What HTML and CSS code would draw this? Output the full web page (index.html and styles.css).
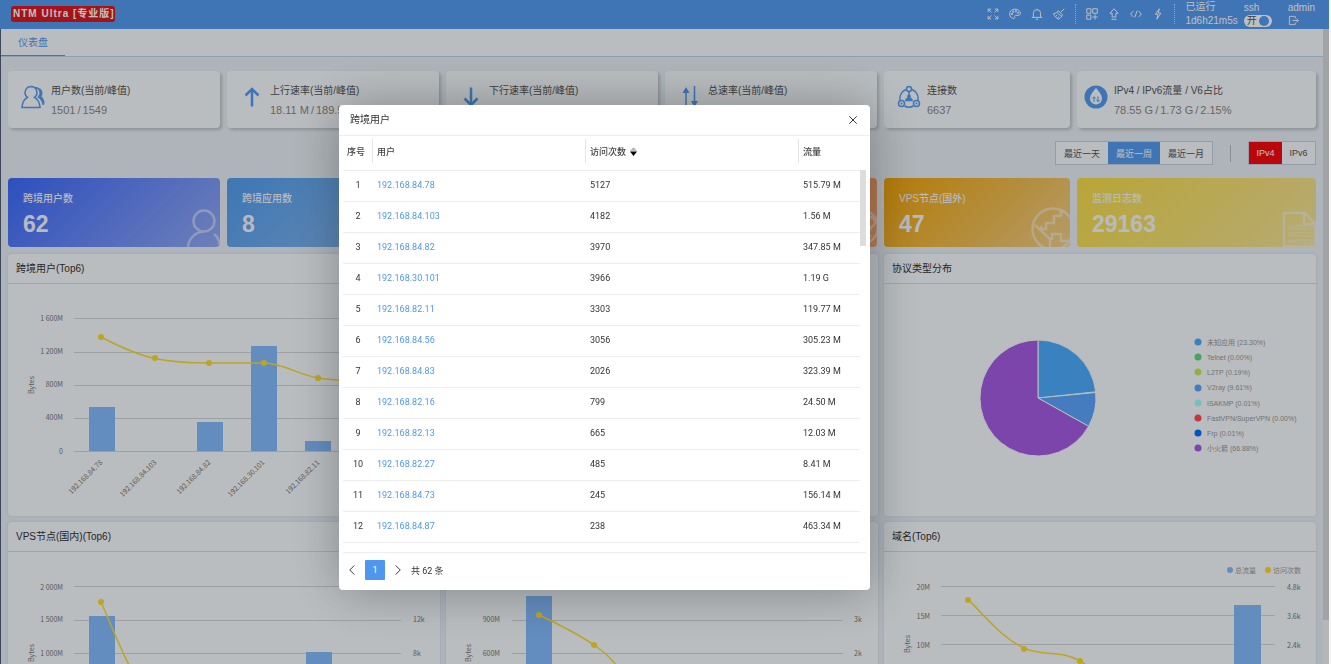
FILE: index.html
```html
<!DOCTYPE html>
<html lang="zh-CN">
<head>
  <meta charset="UTF-8" />
  <meta name="viewport" content="width=device-width, initial-scale=1.0" />
  <title>NTM Ultra</title>
  <link rel="stylesheet" href="styles.css">
</head>
<body>
  <div class="app">
    <header class="topbar">
      <h1 class="brand">NTM Ultra [专业版]</h1>
      <div class="tools">
        <button class="tool" aria-label="全屏"><svg viewBox="0 0 16 16"><path d="M1.500 5.500v-4h4M10.500 1.500h4v4M14.500 10.500v4h-4M5.500 14.500h-4v-4M2 2l4 4M14 2l-4 4M14 14l-4-4M2 14l4-4"/></svg></button>
        <button class="tool" aria-label="主题"><svg viewBox="0 0 16 16"><path d="M8 1.500C4 1.500.8 4.300.8 8c0 3.500 2.600 6 5.500 6 1.500 0 1.500-1 1.200-2.100-.3-1 .2-2.100 1.500-2.100h3c2 0 3.200-1 3.200-2.600C15.200 4 12 1.500 8 1.500z"/><circle cx="4" cy="8" r="1"/><circle cx="5.500" cy="5" r="1"/><circle cx="9" cy="4.300" r="1"/><circle cx="12" cy="6.300" r="1"/></svg></button>
        <button class="tool" aria-label="消息"><svg viewBox="0 0 16 16"><path d="M1 12.500h14M3.200 12.500V7a4.800 4.800 0 0 1 9.600 0v5.500M8 2.200V1M6.500 15h3"/></svg></button>
        <button class="tool" aria-label="清理"><svg viewBox="0 0 16 16"><path d="M15 1L10.500 5.500M7 3.500l5.500 5.500M7 3.500C5.500 6 3.500 7 .8 7.500c1 3.500 3.500 6.200 7.200 7.500 1.800-1.500 3.500-3.500 4.500-6M5.500 5.800l5 5M3.500 11l2-1.500M6 13.300l2-1.800"/></svg></button>
      </div>
      <div class="tools">
        <button class="tool" aria-label="应用"><svg viewBox="0 0 16 16"><path d="M1 1h5.500v6H1zM9 1h6v6H9zM1 9.500h5.500V15H1zM12 8.500v7M8.500 12H15.500"/></svg></button>
        <button class="tool" aria-label="升级"><svg viewBox="0 0 16 16"><path d="M8 1L2.500 7H5.500v5h5V7h3zM4.500 15h7"/></svg></button>
        <button class="tool" aria-label="接口"><svg viewBox="0 0 16 16"><path d="M4.500 4L.8 8l3.700 4M11.500 4L15.200 8l-3.700 4M9.500 3.500l-3 9"/></svg></button>
        <button class="tool" aria-label="电源"><svg viewBox="0 0 16 16"><path d="M9.800 1L4.500 8.500H8L6.500 15 11.800 6.800H8.300z"/></svg></button>
      </div>
      <div class="status uptime"><span>已运行</span><span>1d6h21m5s</span></div>
      <div class="status ssh">
        <label for="ssh">ssh</label>
        <span class="switch"><input type="checkbox" id="ssh" checked><span>开</span></span>
      </div>
      <div class="status">
        <span>admin</span>
        <button class="logout" aria-label="退出"><svg viewBox="0 0 16 16"><path d="M10.500 5V2H2v12h8.500v-3M6.500 8h8.500M12 5l3 3-3 3"/></svg></button>
      </div>
    </header>

    <div class="body">
      <main class="main">
        <nav class="tabs"><a href="#dashboard" class="tab">仪表盘</a></nav>

        <div class="content">
          <section class="cards">
            <div class="stat">
              <svg class="stat-icon" viewBox="0 0 24 24"><path d="M10 1.500a6 6 0 0 0-3.500 10.800C3.500 14 1.200 17 1 22.500h18c-.2-5.500-2.500-8.500-5.500-10.200A6 6 0 0 0 10 1.500zM14.500 2.500a5.500 5.500 0 0 1 3 9.500c2.500 1.500 4.300 4 4.800 8M18.500 4a5 5 0 0 1 1 7.500c2 1.500 3 3.500 3.500 7"/></svg>
              <div><h2>用户数(当前/峰值)</h2><p>1501<i>/</i>1549</p></div>
            </div>
            <div class="stat">
              <svg class="stat-icon bold" viewBox="0 0 24 24"><path d="M12 21.500V3.500M5.500 10.500L12 4l6.500 6.500"/></svg>
              <div><h2>上行速率(当前/峰值)</h2><p>18.11 M<i>/</i>189.52 M</p></div>
            </div>
            <div class="stat">
              <svg class="stat-icon bold" viewBox="0 0 24 24"><path d="M12 2.500V20.500M5.500 13.500L12 20l6.500-6.500"/></svg>
              <div><h2>下行速率(当前/峰值)</h2><p>55.47 M<i>/</i>402.10 M</p></div>
            </div>
            <div class="stat">
              <svg class="stat-icon" viewBox="0 0 24 24"><path d="M8 22V4M16.500 1v18"/><path class="fill" d="M8 2L4.500 8h7zM16.500 22L13 16h7z"/></svg>
              <div><h2>总速率(当前/峰值)</h2><p>73.58 M<i>/</i>591.62 M</p></div>
            </div>
            <div class="stat">
              <svg class="stat-icon" viewBox="0 0 24 24"><circle cx="12" cy="4" r="2.500"/><circle cx="4.500" cy="18.500" r="3"/><circle cx="19.500" cy="18.500" r="3"/><circle class="fill" cx="4.500" cy="18.500" r="1"/><circle class="fill" cx="19.500" cy="18.500" r="1"/><path d="M9 4.500A10 10 0 0 0 3 15M15 4.500A10 10 0 0 1 21 15M7.500 21a10 10 0 0 0 9 0M12 7v4"/><path class="fill" d="M12 9.500c1.800 0 2.300 2 1.600 3.200 1.500.6 2.400 1.800 2.400 3.600H8c0-1.800.9-3 2.400-3.600-.7-1.200-.2-3.200 1.600-3.200z"/></svg>
              <div><h2>连接数</h2><p>6637</p></div>
            </div>
            <div class="stat compact">
              <svg class="stat-icon" viewBox="0 0 24 24"><circle class="fill" cx="12" cy="12" r="11.500"/><path class="drop" d="M12 3c3.500 4 6 7 6 10.500a6 6 0 0 1-12 0C6 10 8.500 7 12 3z"/><path class="thin" d="M10 17v-5M8.300 13.500L10 11.800l1.700 1.700M14 11.500v5M12.300 15l1.700 1.700 1.700-1.700"/></svg>
              <div><h2>IPv4 / IPv6流量 / V6占比</h2><p>78.55 G<i>/</i>1.73 G<i>/</i>2.15%</p></div>
            </div>
          </section>

          <div class="filters">
            <div class="group">
              <button>最近一天</button><button class="on">最近一周</button><button>最近一月</button>
            </div>
            <span class="divider"></span>
            <div class="group ip">
              <button class="on">IPv4</button><button>IPv6</button>
            </div>
          </div>

          <section class="cards">
            <div class="tile royal">
              <h2>跨境用户数</h2><p>62</p>
              <svg viewBox="0 0 40 40"><circle cx="24" cy="14" r="10.500"/><path d="M8 41c0-9 7-16 16-16.500M34 27c4 3 6 7 6 13"/></svg>
            </div>
            <div class="tile sky"><h2>跨境应用数</h2><p>8</p></div>
            <div class="tile green"></div>
            <div class="tile coral">
              <svg viewBox="0 0 40 40"><circle cx="24" cy="20" r="17"/><path d="M28 15a5 5 0 1 1 7 4.500c-2 1-2 2-2 4M33 28v2"/></svg>
            </div>
            <div class="tile orange">
              <h2>VPS节点(国外)</h2><p>47</p>
              <svg viewBox="0 0 40 40"><circle cx="23" cy="22" r="20.500"/><path d="M31 4v5h-7v7h-8v6h-5v-3M5 18l15 14v10M40 34h-9v-7h-9v6"/></svg>
            </div>
            <div class="tile yellow">
              <h2>监测日志数</h2><p>29163</p>
              <svg viewBox="0 0 40 40"><path d="M8 39V6h21l10 11v22zM28 6v11h12"/><path class="fine" d="M13 19h4v3h-4zM19 19h17v3H19zM13 26h4v3h-4zM19 26h17v3H19zM13 33h4v3h-4zM19 33h17v3H19z"/></svg>
            </div>
          </section>

          <section class="panels">
            <article class="panel">
              <h2>跨境用户(Top6)</h2>
              <svg class="chart" viewBox="0 0 432 232">
                <path class="grid" d="M66 34.500H395M66 68.500H395M66 101.500H395M66 134.500H395M66 167.500H395"/>
                <g class="bars"><rect x="81" y="123" width="26" height="44"/><rect x="189" y="138" width="26" height="29"/><rect x="243" y="62" width="26" height="105"/><rect x="297" y="157" width="26" height="10"/></g>
                <path class="line" d="M93 53C112 63 130 71 147 74.500S183 79 201 79H256C274 79 292 91 310 94S346 97 364 97"/>
                <g class="dots"><circle cx="93" cy="53" r="3"/><circle cx="147" cy="74" r="3"/><circle cx="201" cy="79" r="3"/><circle cx="256" cy="79" r="3"/><circle cx="310" cy="94" r="3"/></g>
                <g class="end"><text x="55" y="37">1 600M</text><text x="55" y="70">1 200M</text><text x="55" y="103">800M</text><text x="55" y="136">400M</text><text x="55" y="170">0</text></g>
                <text class="middle" transform="translate(26 101) rotate(-90)">Bytes</text>
                <g class="end">
                  <text transform="translate(95 179) rotate(-45)">192.168.84.78</text>
                  <text transform="translate(149 179) rotate(-45)">192.168.84.103</text>
                  <text transform="translate(203 179) rotate(-45)">192.168.84.82</text>
                  <text transform="translate(257 179) rotate(-45)">192.168.30.101</text>
                  <text transform="translate(312 179) rotate(-45)">192.168.82.11</text>
                </g>
              </svg>
            </article>

            <article class="panel"></article>

            <article class="panel">
              <h2>协议类型分布</h2>
              <svg class="chart pie" viewBox="0 0 432 232">
                <path class="c1" d="M154 114V56A58 58 0 0 1 211.700 107.800Z"/>
                <path class="c4" d="M154 114L211.700 108.500A58 58 0 0 1 204.600 142.300Z"/>
                <path class="c8" d="M154 114L204.600 142.300A58 58 0 1 1 154 56Z"/>
                <g class="legend">
                  <circle class="c1" cx="314" cy="58" r="3.500"/><text x="323" y="61">未知应用 (23.30%)</text>
                  <circle class="c2" cx="314" cy="73" r="3.500"/><text x="323" y="76">Telnet (0.00%)</text>
                  <circle class="c3" cx="314" cy="88" r="3.500"/><text x="323" y="91">L2TP (0.19%)</text>
                  <circle class="c4" cx="314" cy="104" r="3.500"/><text x="323" y="106">V2ray (9.61%)</text>
                  <circle class="c5" cx="314" cy="119" r="3.500"/><text x="323" y="122">ISAKMP (0.01%)</text>
                  <circle class="c6" cx="314" cy="134" r="3.500"/><text x="323" y="137">FastVPN/SuperVPN (0.00%)</text>
                  <circle class="c7" cx="314" cy="149" r="3.500"/><text x="323" y="152">Frp (0.01%)</text>
                  <circle class="c8" cx="314" cy="164" r="3.500"/><text x="323" y="167">小火箭 (66.88%)</text>
                </g>
              </svg>
            </article>

            <article class="panel">
              <h2>VPS节点(国内)(Top6)</h2>
              <svg class="chart" viewBox="0 0 432 232">
                <path class="grid" d="M66 34.500H393M66 68.500H393M66 101.500H393M66 134.500H393M66 167.500H393"/>
                <g class="bars"><rect x="81" y="64" width="26" height="103"/><rect x="298" y="100" width="26" height="67"/></g>
                <path class="line" d="M93 50C102 70 110 92 121 113S135 145 147 150"/>
                <g class="dots"><circle cx="93" cy="50" r="3"/></g>
                <g class="end"><text x="55" y="38">2 000M</text><text x="55" y="70">1 500M</text><text x="55" y="104">1 000M</text></g>
                <text x="405" y="70">12k</text><text x="405" y="104">8k</text>
                <text class="middle" transform="translate(26 101) rotate(-90)">Bytes</text>
              </svg>
            </article>

            <article class="panel">
              <svg class="chart untitled" viewBox="0 0 432 232">
                <path class="grid" d="M66 68.500H397M66 101.500H397M66 134.500H397"/>
                <g class="bars"><rect x="80" y="44" width="26" height="123"/></g>
                <path class="line" d="M93 63C112 72 132 82 148 93S166 108 184 130"/>
                <g class="dots"><circle cx="93" cy="63" r="3"/><circle cx="148" cy="93" r="3"/></g>
                <g class="end"><text x="54" y="70">900M</text><text x="54" y="104">600M</text></g>
                <text x="408" y="70">3k</text><text x="408" y="104">2k</text>
                <text class="middle" transform="translate(25 101) rotate(-90)">Bytes</text>
              </svg>
            </article>

            <article class="panel">
              <h2>域名(Top6)</h2>
              <svg class="chart" viewBox="0 0 432 232">
                <path class="grid" d="M57 34.500H391M57 63.500H391M57 92.500H391M57 121.500H391"/>
                <g class="bars"><rect x="350" y="53" width="27" height="114"/></g>
                <path class="line" d="M84 47C102 66 120 87 140 96S179 98 196 109S230 130 251 132"/>
                <g class="dots"><circle cx="84" cy="48" r="3"/><circle cx="140" cy="97" r="3"/><circle cx="196" cy="109" r="3"/></g>
                <g class="end"><text x="46" y="38">20M</text><text x="46" y="67">15M</text><text x="46" y="96">10M</text></g>
                <text x="403" y="38">4.8k</text><text x="403" y="67">3.6k</text><text x="403" y="96">2.4k</text>
                <text class="middle" transform="translate(26 92) rotate(-90)">Bytes</text>
                <g class="legend"><circle class="bar-key" cx="346" cy="18" r="3"/><text x="351" y="21">总流量</text><circle class="line-key" cx="384" cy="18" r="3"/><text x="389" y="21">访问次数</text></g>
              </svg>
            </article>
          </section>
        </div>
      </main>
      <div class="page-scroll"><span></span></div>
    </div>
  </div>

  <div class="shade"></div>

  <div class="dialog" role="dialog" aria-labelledby="dialog-title">
    <div class="dialog-head">
      <h2 id="dialog-title">跨境用户</h2>
      <button class="close" aria-label="关闭"><svg viewBox="0 0 16 16"><path d="M3 3l10 10M13 3L3 13"/></svg></button>
    </div>
    <div class="dialog-body">
      <table>
        <colgroup><col class="col-no"><col class="col-wide"><col class="col-wide"><col></colgroup>
        <thead>
          <tr>
            <th><div>序号</div></th>
            <th><div>用户</div></th>
            <th><div>访问次数 <svg class="sort" viewBox="0 0 8 10"><path class="up" d="M4 0l4 4H0z"/><path d="M4 10l4-5H0z"/></svg></div></th>
            <th><div>流量</div></th>
          </tr>
        </thead>
        <tbody>
          <tr><td>1</td><td><a href="#u1">192.168.84.78</a></td><td>5127</td><td>515.79 M</td></tr>
          <tr><td>2</td><td><a href="#u2">192.168.84.103</a></td><td>4182</td><td>1.56 M</td></tr>
          <tr><td>3</td><td><a href="#u3">192.168.84.82</a></td><td>3970</td><td>347.85 M</td></tr>
          <tr><td>4</td><td><a href="#u4">192.168.30.101</a></td><td>3966</td><td>1.19 G</td></tr>
          <tr><td>5</td><td><a href="#u5">192.168.82.11</a></td><td>3303</td><td>119.77 M</td></tr>
          <tr><td>6</td><td><a href="#u6">192.168.84.56</a></td><td>3056</td><td>305.23 M</td></tr>
          <tr><td>7</td><td><a href="#u7">192.168.84.83</a></td><td>2026</td><td>323.39 M</td></tr>
          <tr><td>8</td><td><a href="#u8">192.168.82.16</a></td><td>799</td><td>24.50 M</td></tr>
          <tr><td>9</td><td><a href="#u9">192.168.82.13</a></td><td>665</td><td>12.03 M</td></tr>
          <tr><td>10</td><td><a href="#u10">192.168.82.27</a></td><td>485</td><td>8.41 M</td></tr>
          <tr><td>11</td><td><a href="#u11">192.168.84.73</a></td><td>245</td><td>156.14 M</td></tr>
          <tr><td>12</td><td><a href="#u12">192.168.84.87</a></td><td>238</td><td>463.34 M</td></tr>
        </tbody>
      </table>
      <span class="thumb"></span>
    </div>
    <div class="pager">
      <button aria-label="上一页"><svg viewBox="0 0 16 16"><path d="M11 2L5 8l6 6"/></svg></button>
      <button class="current">1</button>
      <button aria-label="下一页"><svg viewBox="0 0 16 16"><path d="M5 2l6 6-6 6"/></svg></button>
      <span>共 62 条</span>
    </div>
  </div>
</body>
</html>
```

FILE: styles.css
```css
* {
  box-sizing: border-box;
}
body {
  margin: 0;
  padding-right: 2px;
  background: #f4f4f4;
  font-family: "Liberation Sans", "Noto Sans CJK SC", sans-serif;
  font-size: 10px;
  color: #333;
}
h1, h2, p {
  margin: 0;
  font-size: 10px;
  font-weight: 400;
}
button {
  padding: 0;
  border: 0;
  background: none;
  color: inherit;
  font: inherit;
  cursor: pointer;
}
a {
  text-decoration: none;
}
svg {
  display: block;
  fill: none;
  stroke: currentColor;
}
.app {
  display: flex;
  flex-direction: column;
  height: 100vh;
  overflow: hidden;
}

/* top bar */
.topbar {
  display: flex;
  align-items: center;
  flex: none;
  height: 29px;
  padding: 0 14px 2px 11px;
  background: #549cf2;
  color: #fff;
}
.brand {
  margin-right: auto;
  padding-left: 2px;
  border-radius: 3px;
  background: #dd1a20;
  font-weight: 700;
  line-height: 16px;
  letter-spacing: 1px;
}
.tools {
  display: flex;
  gap: 10px;
  padding: 4px 10px;
  border-right: 1px dotted #c5dcf8;
}
.tool svg {
  width: 12px;
  height: 12px;
  stroke-width: 1.3;
}
.status {
  display: flex;
  flex-direction: column;
  padding-top: 1px;
  line-height: 13px;
}
.uptime {
  padding-left: 10px;
  line-height: 14px;
}
.ssh {
  margin: 0 16px 0 6px;
}
.switch {
  position: relative;
  height: 13px;
}
.switch input {
  appearance: none;
  display: flex;
  align-items: center;
  justify-content: flex-end;
  width: 28px;
  height: 12px;
  margin: 1px 0 0;
  padding-right: 3px;
  border-radius: 6px;
  background: #fff;
}
.switch input::after {
  content: "";
  width: 10px;
  height: 10px;
  border-radius: 50%;
  background: #549cf2;
}
.switch span {
  position: absolute;
  left: 3px;
  top: 0;
  color: #555;
}
.logout svg {
  width: 11px;
  height: 13px;
  stroke-width: 1.3;
}

/* page frame */
.body {
  display: flex;
  flex: 1;
  min-height: 0;
  border-left: 1px solid #505e78;
}
.main {
  flex: 1;
  min-width: 0;
  background: #e9f0f7;
}
.page-scroll {
  width: 6px;
  background: #f3f3f3;
}
.page-scroll span {
  display: block;
  height: 93%;
  background: #d8dadd;
}
.tabs {
  display: flex;
  height: 28px;
  border-bottom: 1px solid #bdd4ee;
  background: #f8fcff;
}
.tab {
  padding: 0 17px;
  border-bottom: 1px solid #549cf2;
  color: #549cf2;
  line-height: 27px;
}
.content {
  padding: 14px 7px 0;
}
.cards {
  display: grid;
  grid-template-columns: 212fr 212fr 212fr 212fr 186fr 239fr;
  gap: 7px;
}
.stat {
  display: flex;
  gap: 6px;
  height: 57px;
  padding: 12px 0 0 13px;
  overflow: hidden;
  border-radius: 4px;
  background: #f8fcff;
  box-shadow: 2px 2px 3px #bfc5cc;
  white-space: nowrap;
}
.stat.compact {
  padding-left: 7px;
}
.stat-icon {
  flex: none;
  width: 24px;
  height: 24px;
  margin-top: 2px;
  color: #549cf2;
  stroke-width: 1.5;
}
.stat-icon.bold {
  stroke-width: 2.5;
}
.stat-icon .fill {
  fill: currentColor;
  stroke: none;
}
.stat-icon .drop {
  fill: #f8fcff;
  stroke: none;
}
.stat-icon .thin {
  stroke-width: 1;
}
.stat h2 {
  line-height: 15px;
  color: #555;
}
.stat p {
  margin-top: 4px;
  font-size: 11px;
  line-height: 16px;
  color: #888;
}
.stat i {
  margin: 0 2px;
  font-style: normal;
}

/* filters */
.filters {
  display: flex;
  justify-content: flex-end;
  align-items: center;
  height: 24px;
  margin: 13px 0;
}
.group {
  display: flex;
  border: 1px solid #c5d3e2;
  background: #f8fcff;
  font-size: 9px;
}
.group button {
  width: 52px;
  height: 22px;
  color: #555;
}
.group .on {
  background: #549cf2;
  color: #fff;
}
.group.ip button {
  width: 33px;
}
.group.ip .on {
  background: #fa0a10;
}
.divider {
  width: 1px;
  height: 17px;
  margin: 0 17px;
  background: #bbb;
}

/* colour tiles */
.tile {
  position: relative;
  height: 69px;
  padding: 13px 15px;
  overflow: hidden;
  border-radius: 4px;
  color: #f5f8ff;
}
.tile h2 {
  font-weight: 500;
  line-height: 15px;
}
.tile p {
  margin-top: 5px;
  font-size: 23px;
  font-weight: 700;
  line-height: 26px;
}
.tile svg {
  position: absolute;
  right: 0;
  bottom: 0;
  width: 40px;
  height: 40px;
  stroke-width: 2.5;
  opacity: .5;
}
.tile .fine {
  stroke-width: 1;
}
.royal { background: linear-gradient(135deg, #3d6bff, #93abf8); }
.sky { background: linear-gradient(135deg, #529ff0, #94bff0); }
.green { background: linear-gradient(135deg, #35c08a, #8ad8b8); }
.coral { background: linear-gradient(135deg, #f07a30, #f0aa75); }
.orange { background: linear-gradient(135deg, #f0a50a, #f0d08a); }
.yellow { background: linear-gradient(135deg, #f7dd48, #f3e49c); }

/* chart panels */
.panels {
  display: grid;
  grid-template-columns: repeat(3, 1fr);
  gap: 6px;
  margin-top: 7px;
}
.panel {
  border-radius: 4px;
  background: #f8fcff;
  box-shadow: 0 0 3px #ccd9ec;
}
.panel h2 {
  padding-left: 8px;
  border-bottom: 1px solid #d9dde0;
  line-height: 29px;
}
.chart {
  width: 100%;
}
.chart.untitled {
  margin-top: 30px;
}
.chart text {
  fill: #777;
  stroke: none;
  font-family: "Noto Sans CJK SC", sans-serif;
  font-size: 7px;
}
.chart .end {
  text-anchor: end;
}
.chart .middle {
  text-anchor: middle;
}
.chart .legend text {
  fill: #999;
  font-family: "Liberation Sans", "Noto Sans CJK SC", sans-serif;
}
.grid {
  stroke: #d2d6da;
}
.bars {
  fill: #84bcff;
  stroke: none;
}
.line {
  stroke: #fadd30;
  stroke-width: 1.5;
}
.dots, .line-key {
  fill: #fadd30;
  stroke: none;
}
.bar-key {
  fill: #84bcff;
  stroke: none;
}
.pie {
  stroke: #f8fcff;
}
.c1 { fill: #4eadff; }
.c2 { fill: #5ddc81; }
.c3 { fill: #c4ec52; }
.c4 { fill: #5ca4ff; }
.c5 { fill: #9dffff; }
.c6 { fill: #ff4d55; }
.c7 { fill: #0071ff; }
.c8 { fill: #a55ce4; }
.legend {
  stroke: none;
}

/* dialog */
.shade {
  position: fixed;
  inset: 0 2px 0 0;
  background: rgba(0, 0, 0, .25);
}
.dialog {
  position: fixed;
  top: 105px;
  left: 339px;
  width: calc(40% - 1px);
  padding-bottom: 10px;
  border-radius: 4px;
  background: #fff;
  box-shadow: 1px 1px 50px rgba(0, 0, 0, .3);
}
.dialog-head {
  display: flex;
  justify-content: space-between;
  align-items: center;
  height: 31px;
  padding: 0 11px;
  border-bottom: 1px solid #eee;
}
.dialog-head h2 {
  line-height: 28px;
}
.close svg {
  width: 12px;
  height: 12px;
  stroke-width: 1.3;
}
.dialog-body {
  display: flex;
  height: 416px;
  padding: 0 4px;
}
table {
  flex: 1;
  align-self: flex-start;
  border-collapse: collapse;
  table-layout: fixed;
  font-family: Roboto, "Noto Sans CJK SC", sans-serif;
  font-size: 9px;
  text-align: left;
}
.col-no {
  width: 30px;
}
.col-wide {
  width: 213px;
}
th {
  height: 34px;
  padding: 0 0 3px;
  border-bottom: 1px solid #eee;
  color: #444;
  font-weight: 500;
}
th div {
  display: flex;
  align-items: center;
  gap: 4px;
  height: 24px;
  padding-left: 4px;
  border-right: 1px solid #e6e6e6;
}
th:last-child div {
  border: 0;
}
.sort {
  width: 7px;
  height: 9px;
  fill: #000;
  stroke: none;
}
.sort .up {
  fill: #b2b2b2;
}
td {
  height: 31px;
  padding: 0 4px 1px;
  border-bottom: 1px solid #eee;
}
td:first-child {
  text-align: center;
}
td a {
  color: #4f97ee;
}
.thumb {
  width: 6px;
  height: 76px;
  margin-top: 34px;
  background: #ddd;
}
.pager {
  display: flex;
  align-items: center;
  gap: 7px;
  margin: 0 4px;
  padding: 7px 3px 0;
  border-top: 1px solid #eee;
  font-family: Roboto, "Noto Sans CJK SC", sans-serif;
  font-size: 9px;
}
.pager svg {
  width: 12px;
  height: 12px;
  stroke-width: 1.3;
}
.pager .current {
  width: 20px;
  height: 20px;
  border-radius: 1px;
  background: #4f97ee;
  color: #fff;
}
```
